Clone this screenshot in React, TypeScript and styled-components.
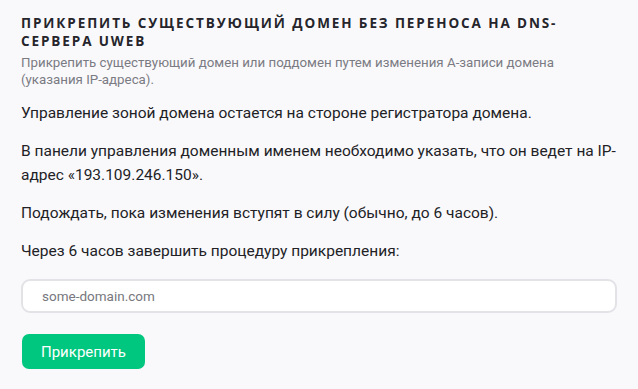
import React from 'react';
import styled, { createGlobalStyle } from 'styled-components';

const GlobalStyle = createGlobalStyle`
  html, body {
    margin: 0;
    padding: 0;
    background: #f9f9fb;
  }
  body {
    font-family: "Roboto", "Noto Sans", sans-serif;
    color: #222226;
  }
`;

const Container = styled.div`
  width: 638px;
  height: 389px;
  box-sizing: border-box;
  padding: 14px 21px 0 21px;
  background: #f9f9fb;
`;

const Title = styled.h1`
  margin: 0;
  font-family: "Open Sans", sans-serif;
  font-size: 13.5px;
  font-weight: 700;
  letter-spacing: 1.9px;
  line-height: 18px;
  text-transform: uppercase;
  color: #25252b;
`;

const Subtitle = styled.p`
  margin: 4px 0 0;
  font-size: 13.3px;
  line-height: 17px;
  color: #7b7b83;
`;

const Text = styled.p<{ $first?: boolean }>`
  margin: ${p => (p.$first ? '13px' : '14px')} 0 0;
  font-size: 15.5px;
  line-height: 24px;
`;

const Field = styled.input`
  display: block;
  width: 100%;
  box-sizing: border-box;
  height: 34px;
  margin-top: 16px;
  padding: 0 19px;
  border: 2px solid #e3e3e7;
  border-radius: 9px;
  background: #fff;
  font-family: inherit;
  font-size: 13.5px;
  color: #222;
  outline: none;

  &::placeholder {
    color: #77777d;
  }
`;

const Button = styled.button`
  display: block;
  margin-top: 21px;
  margin-left: 1px;
  height: 35px;
  padding: 0 19px;
  border: none;
  border-radius: 7px;
  background: #00c77f;
  color: #fff;
  font-family: inherit;
  font-size: 15px;
  cursor: pointer;
`;

const App: React.FC = () => {
  return (
    <Container>
      <GlobalStyle />
      <Title>Прикрепить существующий домен без переноса на DNS-сервера UWEB</Title>
      <Subtitle>
        Прикрепить существующий домен или поддомен путем изменения А-записи домена (указания IP-адреса).
      </Subtitle>
      <Text $first>Управление зоной домена остается на стороне регистратора домена.</Text>
      <Text>В панели управления доменным именем необходимо указать, что он ведет на IP-адрес «193.109.246.150».</Text>
      <Text>Подождать, пока изменения вступят в силу (обычно, до 6 часов).</Text>
      <Text>Через 6 часов завершить процедуру прикрепления:</Text>
      <Field placeholder="some-domain.com" />
      <Button>Прикрепить</Button>
    </Container>
  );
};

export default App;
